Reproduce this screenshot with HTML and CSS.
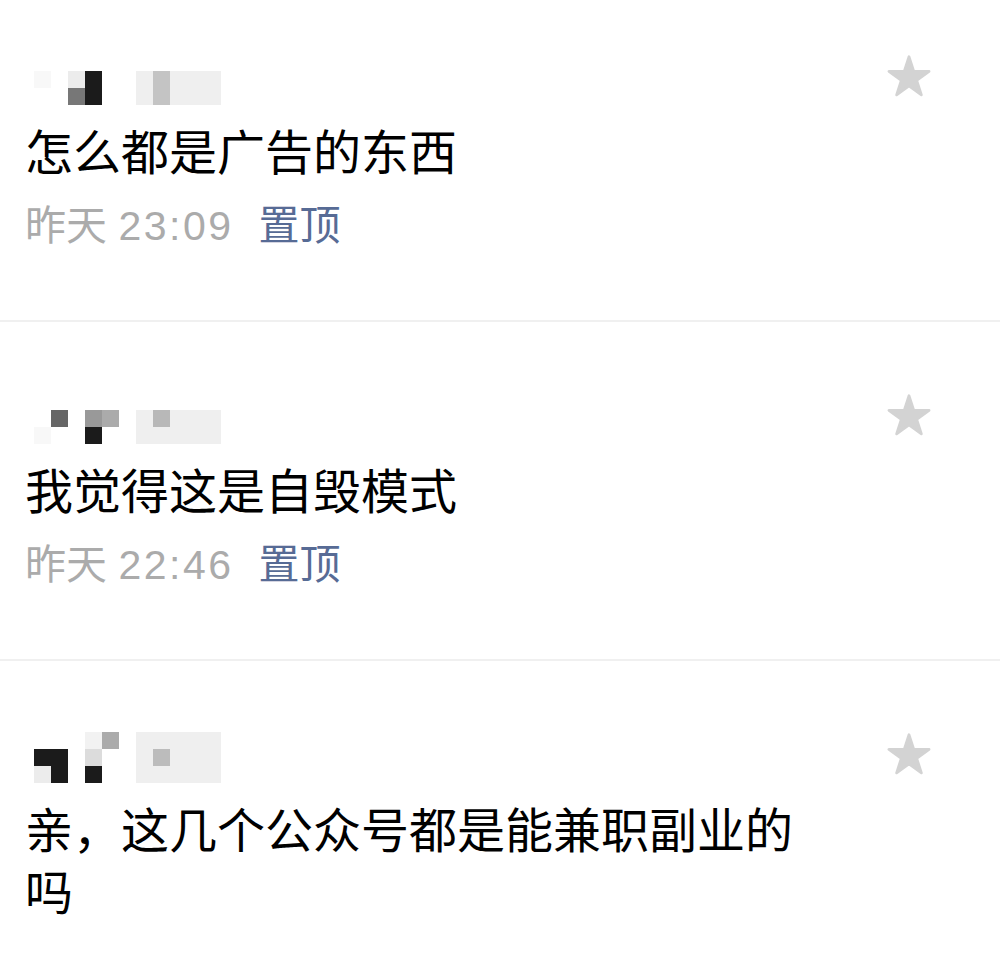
FILE: index.html
```html
<!DOCTYPE html>
<html lang="zh-CN">
<head>
    <meta charset="UTF-8">
    <meta name="viewport" content="width=device-width, initial-scale=1.0">
    <title>留言</title>
    <link rel="stylesheet" href="styles.css">
</head>
<body>
    <div class="list">
        <div class="comment">
            <div class="main">
                <div class="name">
                    <i class="c1 r2 faint"></i>
                    <i class="c3 r2 light"></i>
                    <i class="c3 r3 mid"></i>
                    <i class="c4 r2 black tall"></i>
                    <i class="blk low"></i>
                    <i class="c8 r2 grey tall"></i>
                </div>
                <div class="text">怎么都是广告的东西</div>
                <div class="meta">昨天 <span class="time">23:09</span><span class="pin">置顶</span></div>
            </div>
            <div class="star">
                <svg viewBox="-3 -3 52 48" width="48" height="44"><polygon points="23,0 28.2,15.9 44.9,15.9 31.4,25.7 36.5,41.6 23,31.8 9.5,41.6 14.6,25.7 1.1,15.9 17.8,15.9" /></svg>
            </div>
        </div>

        <div class="comment">
            <div class="main">
                <div class="name">
                    <i class="c2 r2 dark"></i>
                    <i class="c1 r3 faint"></i>
                    <i class="c4 r2 grey2"></i>
                    <i class="c5 r2 grey3"></i>
                    <i class="c4 r3 black"></i>
                    <i class="blk low"></i>
                    <i class="c8 r2 grey4"></i>
                </div>
                <div class="text">我觉得这是自毁模式</div>
                <div class="meta">昨天 <span class="time">22:46</span><span class="pin">置顶</span></div>
            </div>
            <div class="star">
                <svg viewBox="-3 -3 52 48" width="48" height="44"><polygon points="23,0 28.2,15.9 44.9,15.9 31.4,25.7 36.5,41.6 23,31.8 9.5,41.6 14.6,25.7 1.1,15.9 17.8,15.9" /></svg>
            </div>
        </div>

        <div class="comment">
            <div class="main">
                <div class="name">
                    <i class="c1 r2 black"></i>
                    <i class="c2 r2 black"></i>
                    <i class="c2 r3 black"></i>
                    <i class="c1 r3 light"></i>
                    <i class="c4 r1 pale"></i>
                    <i class="c4 r2 light2"></i>
                    <i class="c4 r3 black"></i>
                    <i class="c5 r1 grey3"></i>
                    <i class="blk full"></i>
                    <i class="c8 r2 grey5"></i>
                </div>
                <div class="text">亲，这几个公众号都是能兼职副业的吗</div>
            </div>
            <div class="star">
                <svg viewBox="-3 -3 52 48" width="48" height="44"><polygon points="23,0 28.2,15.9 44.9,15.9 31.4,25.7 36.5,41.6 23,31.8 9.5,41.6 14.6,25.7 1.1,15.9 17.8,15.9" /></svg>
            </div>
        </div>
    </div>
</body>
</html>
```

FILE: styles.css
```css
body {
    margin: 0;
    background-color: #fff;
    font-family: "Noto Sans CJK SC", "Noto Sans", sans-serif;
}
.comment {
    display: flex;
    padding: 71px 67px 70px 25px;
    border-bottom: 2px solid #f0f0f0;
}
.comment:first-child {
    margin-top: -17px;
}
.main {
    flex: 1;
    min-width: 0;
}

/* mosaic nickname */
.name {
    display: grid;
    grid-template-columns: repeat(11, 17px);
    grid-template-rows: repeat(3, 17px);
    margin-left: 9px;
    height: 51px;
}
.name i {
    display: block;
}
.c1 { grid-column: 1; }
.c2 { grid-column: 2; }
.c3 { grid-column: 3; }
.c4 { grid-column: 4; }
.c5 { grid-column: 5; }
.c8 { grid-column: 8; }
.r1 { grid-row: 1; }
.r2 { grid-row: 2; }
.r3 { grid-row: 3; }
.tall { grid-row: 2 / 4; }
.blk {
    grid-column: 7 / 12;
    background-color: #efefef;
}
.blk.low { grid-row: 2 / 4; }
.blk.full { grid-row: 1 / 4; }
.faint { background-color: #f8f8f8; }
.pale { background-color: #f2f2f2; }
.light { background-color: #ececec; }
.light2 { background-color: #dcdcdc; }
.mid { background-color: #777; }
.dark { background-color: #666; }
.black { background-color: #1b1b1b; }
.grey { background-color: #c4c4c4; }
.grey2 { background-color: #999; }
.grey3 { background-color: #ababab; }
.grey4 { background-color: #b8b8b8; }
.grey5 { background-color: #bcbcbc; }

.text {
    margin-top: 13px;
    font-size: 48px;
    line-height: 62px;
    color: #000;
}
.meta {
    margin-top: 22px;
    font-family: "Liberation Sans", "Noto Sans CJK SC", sans-serif;
    font-size: 41px;
    line-height: 48px;
    color: #ababab;
}
.time {
    letter-spacing: 2.5px;
}
.pin {
    margin-left: 25px;
    color: #576b95;
}
.star {
    flex: none;
    width: 48px;
    margin-left: 58px;
}
.star svg {
    display: block;
    fill: #d3d3d3;
    stroke: #d3d3d3;
    stroke-width: 3;
    stroke-linejoin: round;
}
```
